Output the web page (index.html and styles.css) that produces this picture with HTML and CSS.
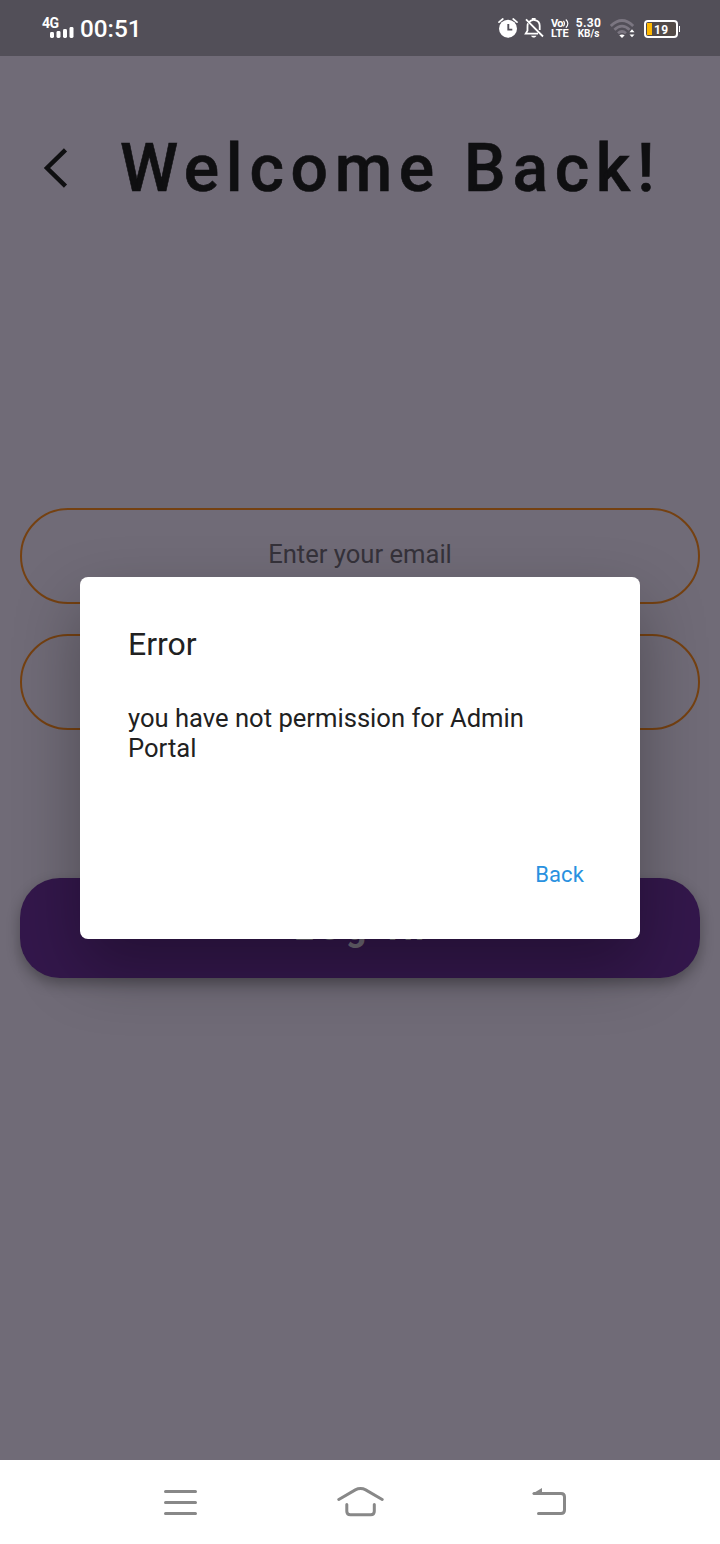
FILE: index.html
```html
<!DOCTYPE html>
<html lang="en">
<head>
<meta charset="utf-8">
<title>Welcome Back!</title>
<link rel="stylesheet" href="styles.css">
</head>
<body>
<div class="phone">
  <header class="status">
    <div class="signal">
      <span class="network">4G</span>
      <svg class="bars" width="24" height="11" viewBox="0 0 24 11" fill="#fff"><rect x="0" y="5" width="4" height="6" rx="1.4"/><rect x="6.5" y="4" width="4" height="7" rx="1.4"/><rect x="13" y="2" width="4" height="9" rx="1.4"/><rect x="19.5" y="0" width="4" height="11" rx="1.4"/></svg>
    </div>
    <span class="clock">00:51</span>
    <div class="indicators">
      <svg class="alarm" width="20" height="20" viewBox="0 0 20 20"><circle cx="10" cy="10.7" r="9" fill="#fff"/><path d="M1 4.2 4.8 1M19 4.2 15.2 1" stroke="#fff" stroke-width="1.7" stroke-linecap="round"/><path d="M10.3 6v5.6h4" stroke="#524f58" stroke-width="1.9" fill="none"/></svg>
      <svg class="bell" width="20" height="20" viewBox="0 0 20 20" fill="none" stroke="#fff" stroke-width="1.8"><path d="M5.4 3.8C6.4 2.8 7.7 2.3 8.7 2.2V1h2v1.2c3.1.5 5 2.7 5 5.6v4.1M3.9 5.4C3.3 7 3.5 8 3.5 12.6L1.7 15.7H14M2 1.3 19 18.5"/><path d="M7 17.7h5.5c-1 2.4-4.5 2.4-5.5 0z" fill="#fff" stroke="none"/></svg>
      <div class="volte"><span class="vo">Vo<svg width="6" height="9" viewBox="0 0 6 9" fill="none" stroke="#fff" stroke-width="1.2"><path d="M.3 2c1.6 1.2 1.6 4 0 5.2M2.8.5c2.7 2.2 2.7 6 0 8.2"/></svg></span><span>LTE</span></div>
      <div class="speed"><span class="rate">5.30</span><span>KB/s</span></div>
      <svg class="wifi" width="25" height="20" viewBox="0 0 25 20" fill="none"><g stroke="#7b7681" stroke-width="2.8"><path d="M.8 7Q12 -4 23.2 7"/><path d="M4.4 10.7Q12 3.6 19.6 10.7"/><path d="M8 14.2Q12 10.8 16 14.2"/></g><path d="M9.3 16.3Q12 14.5 14.7 16.3L12 19z" fill="#fff"/><path d="M19.5 13.2 22 10.3l2.5 2.9zM19.5 15.4h5L22 18.3z" fill="#fff"/></svg>
      <div class="battery"><span class="level"></span><span class="percent">19</span></div>
    </div>
  </header>
  <main class="login">
    <div class="heading">
      <svg class="chevron" width="26" height="40" viewBox="0 0 26 40"><path d="M23.5 1.8 5 20l18.5 18.2" fill="none" stroke="#0f0f11" stroke-width="4.5"/></svg>
      <h1>Welcome Back!</h1>
    </div>
    <div class="field">Enter your email</div>
    <div class="field"></div>
    <div class="login-button">Log In</div>
    <section class="dialog">
      <h2>Error</h2>
      <p>you have not permission for Admin Portal</p>
      <div class="action">Back</div>
    </section>
  </main>
  <nav class="navigation">
    <svg width="33" height="26" viewBox="0 0 33 26" stroke="#888" stroke-width="3" stroke-linecap="round"><path d="M1.5 1.5h30M1.5 12.5h30M1.5 23.5h30"/></svg>
    <svg width="48" height="31" viewBox="0 0 48 31" fill="none" stroke="#888" stroke-width="3" stroke-linecap="round"><path d="M2.8 12.5 19.3 2.9Q24.5 .3 29.7 2.9L46.2 12.5M10.8 17.5v6.7Q10.8 27.7 14.3 27.7h20.5Q38.3 27.7 38.3 24.2V17.5"/></svg>
    <svg width="35" height="29" viewBox="0 0 35 29" fill="none" stroke="#888" stroke-width="3" stroke-linecap="round"><path d="M2 6.5h27q3.5 0 3.5 3.5v13q0 3.5-3.5 3.5H6.5"/><path d="M0 7 10 .9V7z" fill="#888" stroke="none"/></svg>
  </nav>
</div>
</body>
</html>
```

FILE: styles.css
```css
* { box-sizing: border-box; }
body { margin: 0; font-family: Roboto, "Liberation Sans", sans-serif; }
svg { display: block; flex: none; }
.phone { width: 720px; height: 1544px; display: flex; flex-direction: column; overflow: hidden; background: #706b77; }
.status { height: 56px; flex: none; display: flex; padding-left: 42px; background: #524f58; color: #fff; }
.signal { width: 38px; padding-top: 17px; font-size: 14px; line-height: 13px; font-weight: 700; letter-spacing: -.5px; }
.network { display: block; height: 10px; }
.bars { margin-left: 8px; }
.clock { width: 64px; padding-top: 15px; font-size: 24.3px; line-height: 28px; font-weight: 500; white-space: nowrap; }
.indicators { display: flex; align-items: flex-start; margin-left: 354px; font-weight: 700; }
.alarm { margin-top: 18px; }
.bell { margin: 18px 0 0 6px; }
.volte { width: 19px; margin: 18px 0 0 7px; font-size: 11px; line-height: 11px; display: flex; flex-direction: column; }
.vo { display: flex; align-items: center; height: 10px; letter-spacing: -0.6px; }
.speed { width: 27px; margin: 17px 0 0 5px; display: flex; flex-direction: column; align-items: center; font-size: 10px; line-height: 10px; }
.rate { font-size: 12px; line-height: 12px; letter-spacing: .3px; }
.wifi { margin: 19px 0 0 8px; }
.battery { position: relative; width: 34px; height: 18px; margin: 20px 0 0 9px; border: 2px solid #fff; border-radius: 4px; background: #524a47; display: flex; align-items: center; }
.battery::after { content: ""; position: absolute; right: -4px; top: 4px; width: 1.5px; height: 6px; background: #fff; }
.level { width: 5px; height: 12px; margin-left: 1px; background: #ffb800; }
.percent { margin-left: 2px; padding-top: 1px; font-size: 12px; line-height: 14px; letter-spacing: .3px; }
.login { position: relative; flex: 1; padding: 0 20px; }
.heading { height: 452px; padding: 72px 0 0 22px; display: flex; align-items: flex-start; }
.chevron { margin-top: 20px; }
h1 { margin: 1px 0 0 52px; color: #0f0f11; font-size: 66px; line-height: 80px; font-weight: 500; letter-spacing: 6.7px; white-space: nowrap; -webkit-text-stroke: .6px #0f0f11; }
.field { height: 96px; margin-bottom: 30px; border: 2px solid #754111; border-radius: 48px; color: #35323a; text-align: center; font-size: 25.6px; line-height: 88px; }
.login-button { height: 100px; margin-top: 148px; padding-left: 4px; border-radius: 40px; background: #33174b; box-shadow: 0 6px 14px rgba(0,0,0,.3); color: #706b77; text-align: center; font-size: 36px; line-height: 101px; font-weight: 700; letter-spacing: 6px; }
.dialog { position: absolute; left: 80px; top: 521px; width: 560px; height: 362px; padding: 48px; border-radius: 8px; background: #fff; box-shadow: 0 28px 66px rgba(0,0,0,.3); color: #212121; display: flex; flex-direction: column; }
h2 { margin: 0; font-size: 32px; line-height: 38px; font-weight: 400; }
p { margin: 40px 0 0; font-size: 25.6px; line-height: 30px; }
.action { margin: auto 8px 1px auto; color: #2991e0; font-size: 22px; line-height: 30px; letter-spacing: .1px; }
.navigation { height: 84px; flex: none; background: #fff; display: flex; align-items: flex-start; padding: 27px 0 0 164px; }
.navigation svg { margin-right: 139px; }
.navigation svg:first-child { margin-top: 3px; }
.navigation svg:nth-child(2) { margin-right: 148px; }
.navigation svg:last-child { margin-right: 0; }
```
